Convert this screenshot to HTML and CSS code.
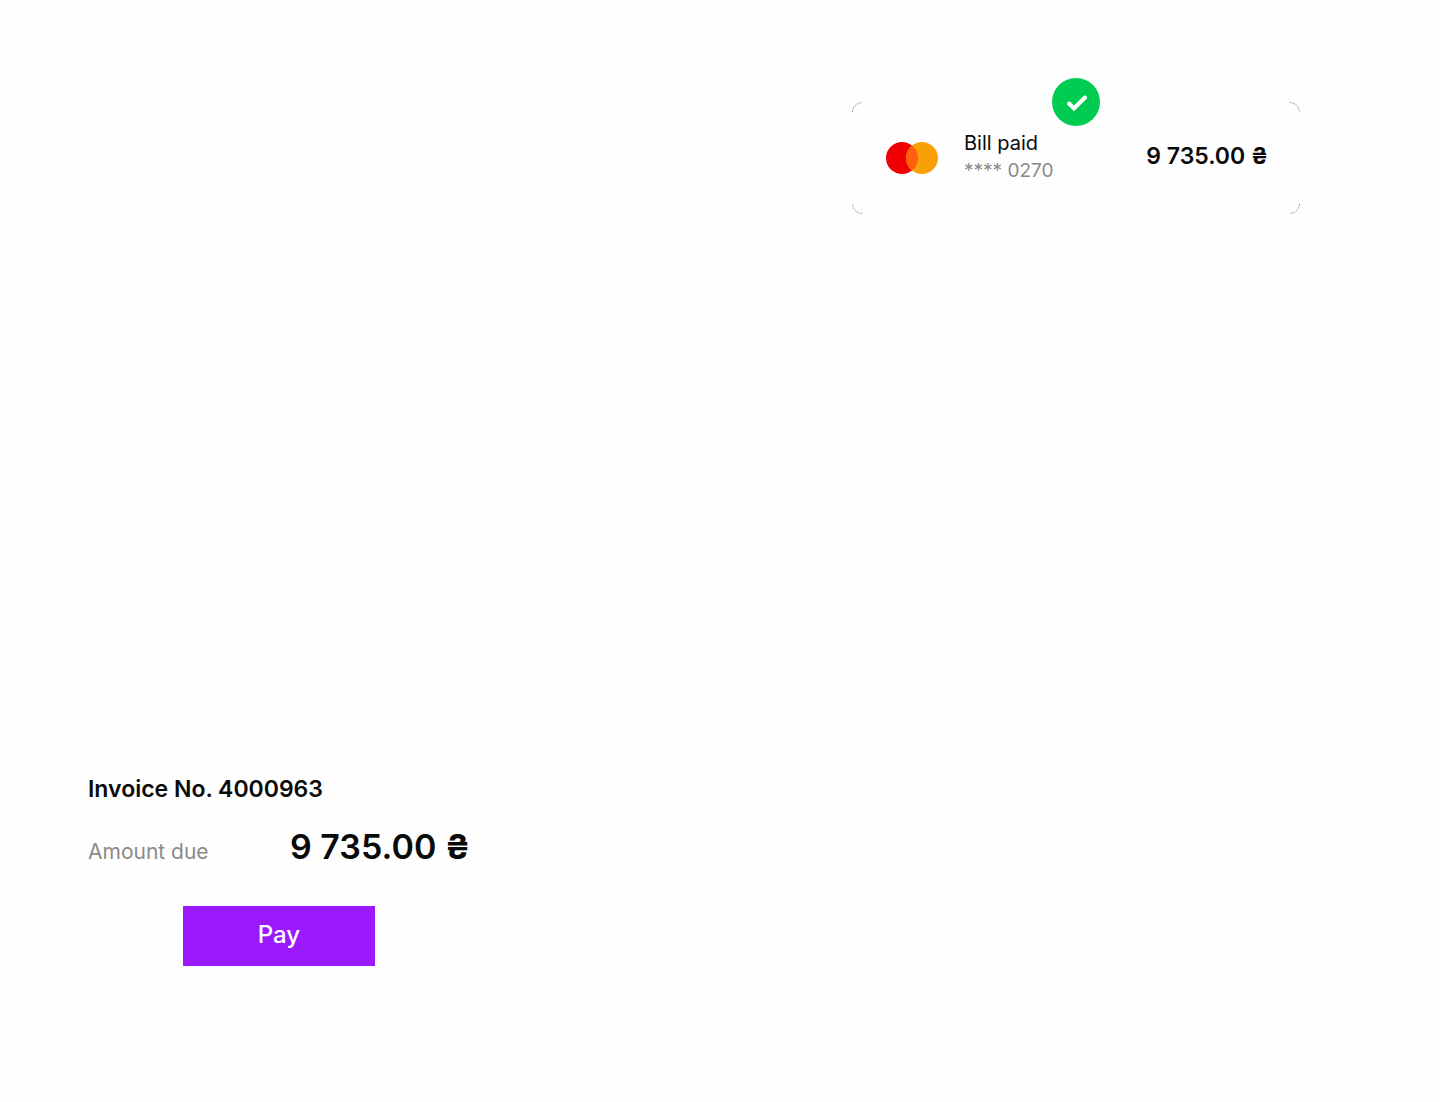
FILE: index.html
```html
<!DOCTYPE html>
<html lang="en">
<head>
  <meta charset="UTF-8">
  <meta name="viewport" content="width=device-width, initial-scale=1.0">
  <title>Invoice payment</title>
  <link rel="stylesheet" href="styles.css">
</head>
<body>
  <main class="page">
    <section class="invoice">
      <h1 class="invoice-title">Invoice No. 4000963</h1>
      <div class="invoice-row">
        <span class="invoice-label">Amount due</span>
        <strong class="invoice-amount">9 735.00 <span class="currency">₴</span></strong>
      </div>
      <button type="button" class="pay">Pay</button>
    </section>

    <section class="receipt">
      <svg class="corner top-left" viewBox="0 0 10 10"><path d="M.5 10A10 10 0 0 1 10 .5"/></svg>
      <svg class="corner top-right" viewBox="0 0 10 10"><path d="M.5 10A10 10 0 0 1 10 .5"/></svg>
      <svg class="corner bottom-left" viewBox="0 0 10 10"><path d="M.5 10A10 10 0 0 1 10 .5"/></svg>
      <svg class="corner bottom-right" viewBox="0 0 10 10"><path d="M.5 10A10 10 0 0 1 10 .5"/></svg>

      <svg class="badge" viewBox="0 0 48 48" role="img" aria-label="Paid">
        <circle cx="24" cy="24" r="24" fill="#00cc52"/>
        <path d="M16.5 25l5.500 5.500L33.500 19" fill="none" stroke="#fff" stroke-width="4"/>
        <circle cx="17" cy="25.500" r="2" fill="#fff"/>
        <circle cx="33" cy="19.500" r="2" fill="#fff"/>
      </svg>

      <svg class="card-logo" viewBox="0 0 52 32" role="img" aria-label="Mastercard">
        <circle cx="16" cy="16" r="16" fill="#ee0005"/>
        <circle cx="36" cy="16" r="16" fill="#f9a006"/>
        <path d="M26 3.500a16 16 0 0 1 0 25a16 16 0 0 1 0-25z" fill="#ff5f0f"/>
      </svg>
      <div class="receipt-info">
        <p class="receipt-status">Bill paid</p>
        <p class="receipt-card">**** 0270</p>
      </div>
      <strong class="receipt-amount">9 735.00 <span class="currency">₴</span></strong>
    </section>
  </main>
</body>
</html>
```

FILE: styles.css
```css
* {
  box-sizing: border-box;
  margin: 0;
  padding: 0;
}
body {
  font-family: Inter, "Noto Sans", sans-serif;
  color: #0a0a0a;
  background: #fefefe;
}
.page {
  display: flex;
  justify-content: space-between;
  gap: 40px;
  min-height: 100vh;
  padding: 102px 140px 136px 88px;
}
.invoice {
  display: flex;
  flex-direction: column;
  align-self: flex-end;
  width: 382px;
}
.invoice-title {
  font-size: 23px;
  font-weight: 600;
  line-height: 32px;
}
.invoice-row {
  display: flex;
  justify-content: space-between;
  align-items: baseline;
  margin-top: 20px;
  line-height: 44px;
}
.invoice-label {
  font-size: 21px;
  color: #8a8a8a;
}
.invoice-amount {
  font-size: 34px;
  font-weight: 600;
}
.currency {
  font-weight: 700;
}
.pay {
  align-self: center;
  width: 192px;
  height: 60px;
  margin-top: 32px;
  padding-bottom: 4px;
  border: none;
  background: #9b19ff;
  color: #fff;
  font-family: inherit;
  font-size: 24px;
  font-weight: 500;
  cursor: pointer;
}
.receipt {
  position: relative;
  display: flex;
  align-items: center;
  align-self: flex-start;
  width: 448px;
  height: 112px;
  padding: 0 32px 0 34px;
}
.corner {
  position: absolute;
  width: 10px;
  height: 10px;
  fill: none;
  stroke: #999;
  stroke-width: 1;
  stroke-dasharray: 2 1;
}
.top-left {
  top: 0;
  left: 0;
}
.top-right {
  top: 0;
  right: 0;
  transform: rotate(90deg);
}
.bottom-left {
  bottom: 0;
  left: 0;
  transform: rotate(270deg);
}
.bottom-right {
  right: 0;
  bottom: 0;
  transform: rotate(180deg);
}
.badge {
  position: absolute;
  top: -24px;
  left: 50%;
  width: 48px;
  height: 48px;
  margin-left: -24px;
}
.card-logo {
  width: 52px;
  height: 32px;
}
.receipt-info {
  margin-left: 26px;
  padding-bottom: 2px;
  font-size: 20px;
  line-height: 28px;
}
.receipt-card {
  font-size: 19px;
  color: #8a8a8a;
}
.receipt-amount {
  margin-left: auto;
  padding-bottom: 4px;
  font-size: 23px;
  font-weight: 600;
}
```
